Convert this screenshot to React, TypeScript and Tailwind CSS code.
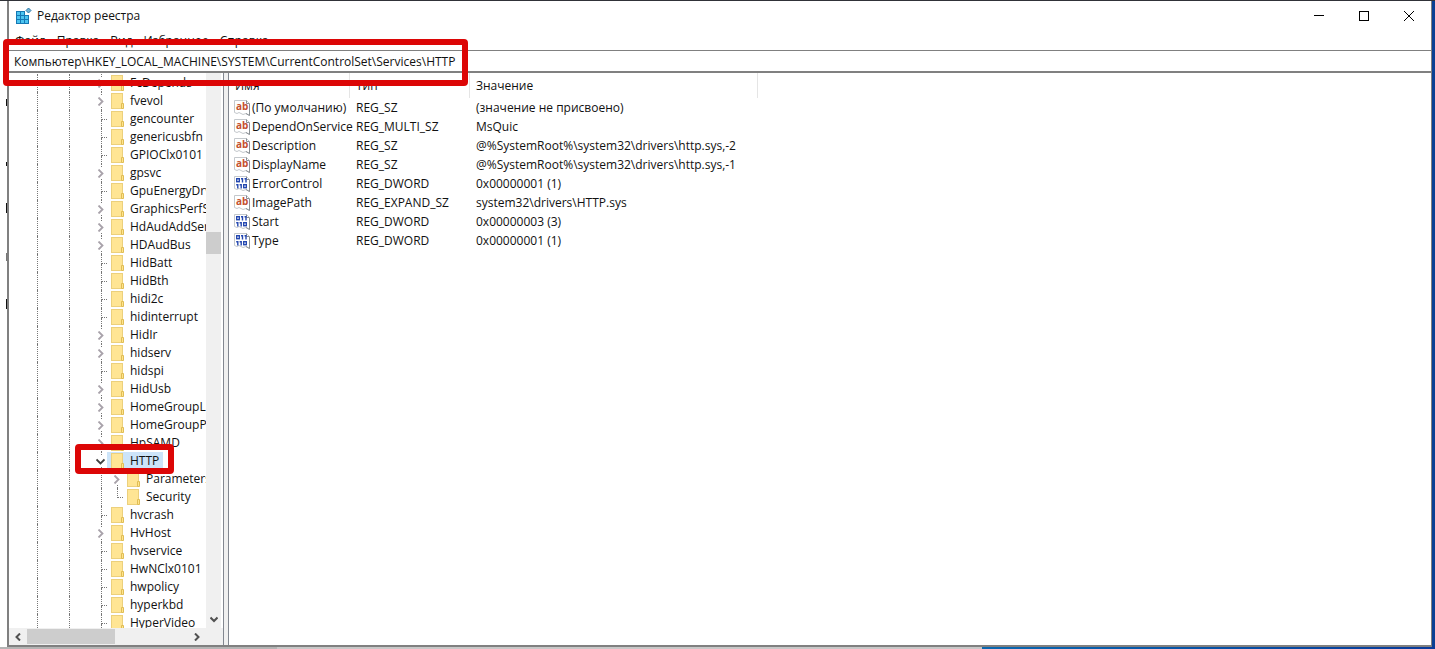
import React from "react";

type Branch = "closed" | "open" | "none";
type TreeNode = { name: string; branch: Branch; child?: boolean; last?: boolean; selected?: boolean };

const tree: TreeNode[] = [
  { name: "FcDepends", branch: "closed" },
  { name: "fvevol", branch: "closed" },
  { name: "gencounter", branch: "none" },
  { name: "genericusbfn", branch: "none" },
  { name: "GPIOClx0101", branch: "none" },
  { name: "gpsvc", branch: "closed" },
  { name: "GpuEnergyDrv", branch: "none" },
  { name: "GraphicsPerfSv", branch: "closed" },
  { name: "HdAudAddSer", branch: "closed" },
  { name: "HDAudBus", branch: "closed" },
  { name: "HidBatt", branch: "none" },
  { name: "HidBth", branch: "none" },
  { name: "hidi2c", branch: "none" },
  { name: "hidinterrupt", branch: "none" },
  { name: "HidIr", branch: "closed" },
  { name: "hidserv", branch: "closed" },
  { name: "hidspi", branch: "none" },
  { name: "HidUsb", branch: "closed" },
  { name: "HomeGroupLi", branch: "closed" },
  { name: "HomeGroupPr", branch: "closed" },
  { name: "HpSAMD", branch: "closed" },
  { name: "HTTP", branch: "open", selected: true },
  { name: "Parameters", branch: "closed", child: true },
  { name: "Security", branch: "none", child: true, last: true },
  { name: "hvcrash", branch: "none" },
  { name: "HvHost", branch: "closed" },
  { name: "hvservice", branch: "none" },
  { name: "HwNClx0101", branch: "none" },
  { name: "hwpolicy", branch: "none" },
  { name: "hyperkbd", branch: "none" },
  { name: "HyperVideo", branch: "none" },
];

const values = [
  { name: "(По умолчанию)", type: "REG_SZ", data: "(значение не присвоено)" },
  { name: "DependOnService", type: "REG_MULTI_SZ", data: "MsQuic" },
  { name: "Description", type: "REG_SZ", data: "@%SystemRoot%\\system32\\drivers\\http.sys,-2" },
  { name: "DisplayName", type: "REG_SZ", data: "@%SystemRoot%\\system32\\drivers\\http.sys,-1" },
  { name: "ErrorControl", type: "REG_DWORD", data: "0x00000001 (1)" },
  { name: "ImagePath", type: "REG_EXPAND_SZ", data: "system32\\drivers\\HTTP.sys" },
  { name: "Start", type: "REG_DWORD", data: "0x00000003 (3)" },
  { name: "Type", type: "REG_DWORD", data: "0x00000001 (1)" },
];

function RegistryIcon() {
  return (
    <svg width="18" height="18" viewBox="0 0 18 18" aria-hidden="true">
      <path d="M1 4h9v4h4v9H1z" fill="#1478b4" />
      <path d="M2 5h3v3H2zM6 5h3v3H6zM2 9h3v3H2zM6 9h3v3H6zM10 9h3v3h-3zM2 13h3v3H2zM6 13h3v3H6zM10 13h3v3h-3z" fill="#4cc4f0" />
      <path d="M13.500 1L16 3.500L13.500 6L11 3.500z" fill="#6fb4d8" stroke="#2a78a8" />
    </svg>
  );
}

function Folder() {
  return (
    <svg className="shrink-0" width="13" height="16" viewBox="0 0 13 16" aria-hidden="true">
      <rect x="0.5" y="0.5" width="11" height="15" fill="#ffe594" stroke="#ecd07c" />
      <path d="M10.500 10.500h2v5h-2z" fill="#ffe48c" stroke="#e0bd55" />
    </svg>
  );
}

function Chevron({ open }: { open: boolean }) {
  return (
    <svg width="9" height="9" viewBox="0 0 9 9" fill="none" aria-hidden="true">
      {open ? (
        <path d="M0.500 2.500L4.500 6.500L8.500 2.500" stroke="#404040" strokeWidth="1.800" />
      ) : (
        <path d="M2.500 0.500L6.500 4.500L2.500 8.500" stroke="#a8a2aa" strokeWidth="1.800" />
      )}
    </svg>
  );
}

function ValueIcon({ binary }: { binary: boolean }) {
  return (
    <svg className="shrink-0" width="16" height="16" viewBox="0 0 16 16" aria-hidden="true">
      <path d="M0.500 0.500H12.500L15.500 3.500V15.500L12 13.500L9 14.500L5 12.500L3 13.500L0.500 12.500Z" fill="#fff" stroke="#c4c8cc" />
      <path d="M12.500 0.500V3.500H15.500M15.500 4V15.500L12 13.500" fill="none" stroke="#8a9094" />
      {binary ? (
        <g fill="none" stroke="#2448b0" strokeWidth="1.400">
          <rect x="2.700" y="2.700" width="2.600" height="3" />
          <path d="M8.500 2v4.400M7 2.700h1.500M12 2v4.400M10.500 2.700h1.500" />
          <path d="M3.800 8v4.400M2.200 8.700h1.600M7.200 8v4.400M5.600 8.700h1.600" />
          <rect x="9.700" y="8.700" width="2.600" height="3" />
        </g>
      ) : (
        <text x="2" y="10" fontSize="10" fontWeight="700" fill="#c4502f" fontFamily="Open Sans">ab</text>
      )}
    </svg>
  );
}

function TreeRow({ node }: { node: TreeNode }) {
  const line = "border-l border-dotted border-[#777]";
  return (
    <li className="flex h-[18px] items-stretch" role="treeitem" aria-selected={!!node.selected}>
      <span className={"ml-7 w-8 shrink-0 " + line} />
      <span className={"w-6 shrink-0 " + line} />
      {node.child && (
        <span className="flex w-4 shrink-0 justify-end">
          <span className={"w-2 " + line} />
        </span>
      )}
      <span className="flex w-[14px] shrink-0 flex-col items-end">
        {node.branch !== "none" ? (
          <>
            <span className={"h-[3px] w-[6px] " + line} />
            <button className="flex h-3 w-[14px] items-center justify-center" aria-label={node.name}>
              <Chevron open={node.branch === "open"} />
            </button>
            <span className={"h-[3px] w-[6px] " + line} />
          </>
        ) : (
          <>
            <span className={"h-[10px] w-[6px] border-b border-dotted border-[#777] " + line} />
            <span className={node.last ? "flex-1" : "w-[6px] flex-1 " + line} />
          </>
        )}
      </span>
      <span className={"flex items-center gap-[6px] px-1 whitespace-nowrap " + (node.selected ? "bg-[#cce4f9]" : "")}>
        <Folder />
        <span>{node.name}</span>
      </span>
    </li>
  );
}

export default function App() {
  return (
    <div className="relative flex h-screen flex-col overflow-hidden bg-white font-['Open_Sans','Noto_Sans',sans-serif] text-xs text-[#111]">
      <div className="h-px shrink-0 bg-[#303238]" />
      <div className="flex min-h-0 flex-1">
        <div className="flex w-[7px] shrink-0 flex-col items-end bg-white pt-[98px]">
          <span className="h-[7px] w-px bg-[#111]" />
          <span className="mt-14 h-1 w-px bg-[#111]" />
          <span className="mt-[37px] h-[10px] w-px bg-[#111]" />
          <span className="mt-10 h-2 w-px bg-[#777]" />
          <span className="mt-[38px] h-[10px] w-px bg-[#111]" />
        </div>
        <main className="flex min-w-0 flex-1 flex-col border-r border-b-2 border-l-2 border-[#808080] bg-white">
          <header className="flex h-[30px] shrink-0 items-center pl-[6px]">
            <RegistryIcon />
            <h1 className="ml-1 flex-1">Редактор реестра</h1>
            <button className="flex h-full w-[45px] items-center justify-center" aria-label="Свернуть">
              <svg width="10" height="10"><path d="M0 4.500H10" stroke="#000" /></svg>
            </button>
            <button className="flex h-full w-[45px] items-center justify-center" aria-label="Развернуть">
              <svg width="10" height="10"><rect x="0.5" y="0.5" width="9" height="9" fill="none" stroke="#000" /></svg>
            </button>
            <button className="flex h-full w-[45px] items-center justify-center" aria-label="Закрыть">
              <svg width="10" height="10"><path d="M0 0L10 10M10 0L0 10" stroke="#000" /></svg>
            </button>
          </header>
          <nav className="flex h-[19px] shrink-0 items-center gap-[11px] pl-[6px]">
            <button>Файл</button>
            <button>Правка</button>
            <button>Вид</button>
            <button>Избранное</button>
            <button>Справка</button>
          </nav>
          <input
            className="h-[23px] w-full shrink-0 border-t border-b-2 border-[#808080] bg-white px-[5px] outline-none"
            aria-label="Путь"
            defaultValue={"Компьютер\\HKEY_LOCAL_MACHINE\\SYSTEM\\CurrentControlSet\\Services\\HTTP"}
          />
          <div className="flex min-h-0 flex-1">
            <section className="flex w-[215px] shrink-0 flex-col border-r border-[#828790]">
              <div className="flex min-h-0 flex-1">
                <ul className="w-[197px] shrink-0 overflow-hidden pt-px" role="tree">
                  {tree.map((n) => (
                    <TreeRow key={n.name} node={n} />
                  ))}
                </ul>
                <div className="flex w-[15px] flex-col bg-[#f0f0f0]">
                  <div className="mt-[159px] h-[22px] bg-[#cdcdcd]" />
                  <div className="flex flex-1 items-end justify-center pb-1">
                    <svg width="8" height="8" fill="none"><path d="M0.500 1.500L4 5L7.500 1.500" stroke="#505050" strokeWidth="2" /></svg>
                  </div>
                </div>
              </div>
              <div className="flex h-[17px] shrink-0 items-center bg-[#f0f0f0] pr-[22px]">
                <svg className="mx-[5px]" width="8" height="8" fill="none"><path d="M6 0.500L2.500 4L6 7.500" stroke="#505050" strokeWidth="2" /></svg>
                <div className="h-[15px] w-[88px] bg-[#cdcdcd]" />
                <svg className="ml-auto" width="8" height="8" fill="none"><path d="M2 0.500L5.500 4L2 7.500" stroke="#505050" strokeWidth="2" /></svg>
              </div>
            </section>
            <div className="w-1 shrink-0 bg-[#f0f0f0]" />
            <section className="min-w-0 flex-1 overflow-hidden border-l border-[#828790]">
              <table className="w-[529px] table-fixed border-separate border-spacing-0 text-left">
                <colgroup>
                  <col className="w-[121px]" />
                  <col className="w-[120px]" />
                  <col className="w-[288px]" />
                </colgroup>
                <thead>
                  <tr className="h-[25px]">
                    {["Имя", "Тип", "Значение"].map((h) => (
                      <th key={h} className="border-r border-[#e5e5e5] p-0 pl-[6px] font-normal">{h}</th>
                    ))}
                  </tr>
                </thead>
                <tbody>
                  {values.map((v) => (
                    <tr key={v.name} className="h-[19px] whitespace-nowrap">
                      <td className="p-0 pl-[5px]">
                        <div className="flex items-center gap-[2px]">
                          <ValueIcon binary={v.type === "REG_DWORD"} />
                          {v.name}
                        </div>
                      </td>
                      <td className="p-0 pl-[6px]">{v.type}</td>
                      <td className="p-0 pl-[6px]">{v.data}</td>
                    </tr>
                  ))}
                </tbody>
              </table>
            </section>
          </div>
        </main>
        <div className="w-[3px] shrink-0 bg-[#0a4093]" />
      </div>
      <div className="flex h-[2px] shrink-0">
        <div className="w-[277px] bg-[#b4b4b4]" />
        <div className="w-[705px] bg-[#c8c8c8]" />
        <div className="flex-1 bg-linear-to-r from-[#0b68b0] to-[#0a3a9a]" />
      </div>
      <div className="absolute top-[39px] left-[3px] h-[47px] w-[465px] rounded-sm border-6 border-[#dc0606]" />
      <div className="absolute top-[444px] left-[75px] h-[30px] w-[99px] rounded-sm border-6 border-[#dc0606]" />
    </div>
  );
}
